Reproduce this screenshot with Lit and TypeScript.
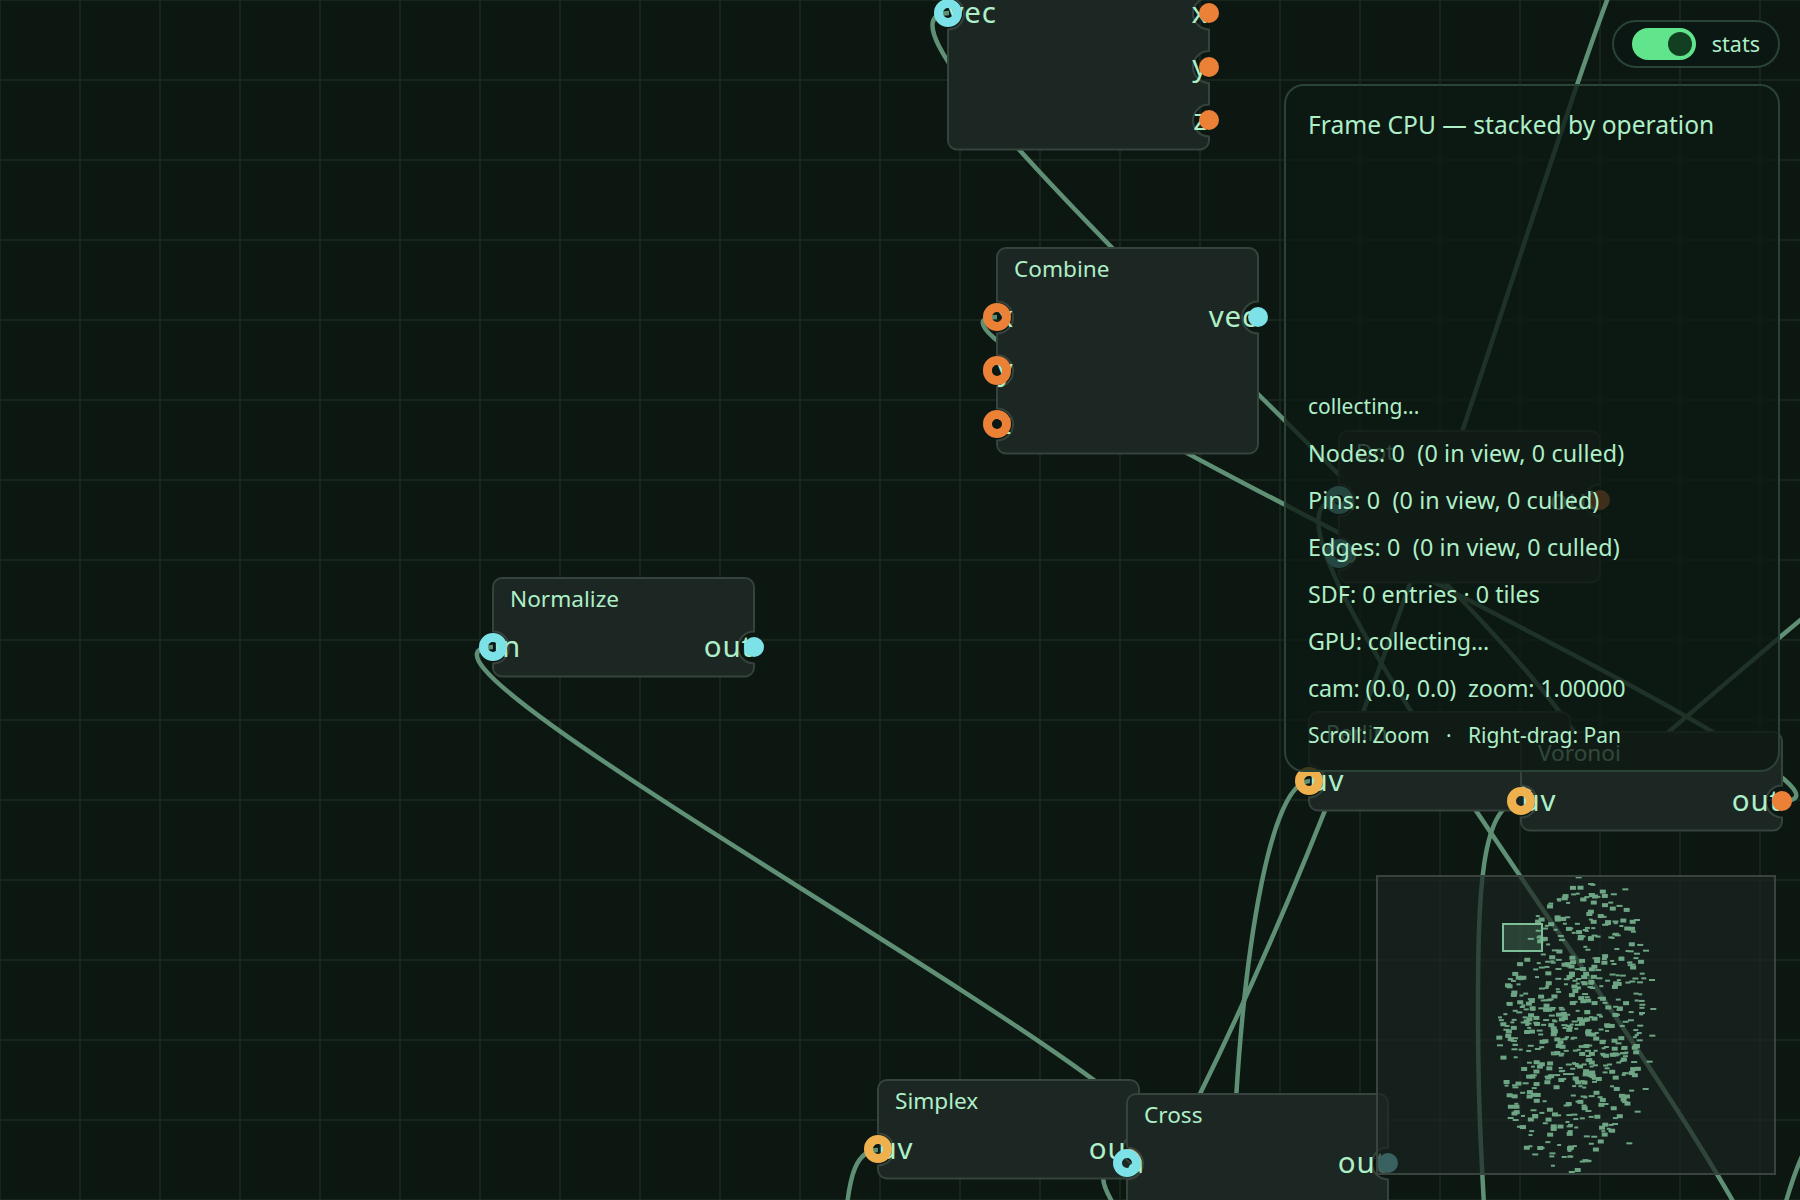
import { LitElement, html, css, svg } from "lit";
import { customElement } from "lit/decorators.js";

type Pin = { label: string; color: string };
type NodeData = { title: string; x: number; y: number; h: number; ins: Pin[]; outs: Pin[] };

const CYAN = "#7ce2e8";
const ORANGE = "#ea8137";
const YELLOW = "#efb04e";
const W = 261;
const FIRST = 69.5;
const STEP = 53.5;

const NODES: NodeData[] = [
  { title: "Dot", x: 1339, y: 430, h: 153, ins: [{ label: "a", color: CYAN }, { label: "b", color: CYAN }], outs: [{ label: "out", color: ORANGE }] },
  { title: "Perlin", x: 1309, y: 711, h: 100, ins: [{ label: "uv", color: YELLOW }], outs: [{ label: "out", color: ORANGE }] },
  { title: "Voronoi", x: 1521, y: 731, h: 100, ins: [{ label: "uv", color: YELLOW }], outs: [{ label: "out", color: ORANGE }] },
  { title: "Split", x: 948, y: -57, h: 207, ins: [{ label: "vec", color: CYAN }], outs: [{ label: "x", color: ORANGE }, { label: "y", color: ORANGE }, { label: "z", color: ORANGE }] },
  { title: "Combine", x: 997, y: 247, h: 207, ins: [{ label: "x", color: ORANGE }, { label: "y", color: ORANGE }, { label: "z", color: ORANGE }], outs: [{ label: "vec", color: CYAN }] },
  { title: "Normalize", x: 493, y: 577, h: 100, ins: [{ label: "in", color: CYAN }], outs: [{ label: "out", color: CYAN }] },
  { title: "Simplex", x: 878, y: 1079, h: 100, ins: [{ label: "uv", color: YELLOW }], outs: [{ label: "out", color: ORANGE }] },
  { title: "Cross", x: 1127, y: 1093, h: 207, ins: [{ label: "a", color: CYAN }, { label: "b", color: CYAN }], outs: [{ label: "out", color: CYAN }] },
];

const link = (x1: number, y1: number, x2: number, y2: number, d = 150) =>
  `M${x1},${y1} C${x1 + d},${y1} ${x2 - d},${y2} ${x2},${y2}`;

const WIRES: string[] = [
  link(1141, 1150, 493, 647),
  link(1573, 781, 949, 13),
  link(1782, 801, 997, 317),
  link(1761, 1340, 1339, 500),
  "M1609,-5 C1520,230 1395,700 1198,1098",
  "M1310,781 C1270,781 1245,950 1236,1100",
  "M1521,801 C1480,801 1478,900 1478,1010 C1478,1100 1481,1150 1484,1205",
  "M1600,790 C1660,740 1740,670 1810,612",
  "M1805,1150 Q1795,1170 1785,1205",
  "M878,1150 C855,1150 850,1180 847,1205",
  "M1127,1164 C1090,1164 1105,1190 1114,1205",
];

function shape(n: NodeData, h: number): string {
  const r = 9, nr = 16;
  let d = `M${r},0 H${W - r} A${r},${r} 0 0 1 ${W},${r}`;
  n.outs.forEach((_, i) => {
    const y = FIRST + STEP * i;
    d += ` V${y - nr} A${nr},${nr} 0 0 0 ${W},${y + nr}`;
  });
  d += ` V${h - r} A${r},${r} 0 0 1 ${W - r},${h} H${r} A${r},${r} 0 0 1 0,${h - r}`;
  n.ins.forEach((_, i) => {
    const y = FIRST + STEP * (n.ins.length - 1 - i);
    d += ` V${y + nr} A${nr},${nr} 0 0 0 0,${y - nr}`;
  });
  d += ` V${r} A${r},${r} 0 0 1 ${r},0 Z`;
  return d;
}

const OUTLIERS: [number, number][] = [
  [855, 272], [873, 360], [877, 447], [874, 527], [866, 605], [854, 687], [830, 755], [805, 850],
  [828, 180], [793, 88], [837, 367], [843, 459], [836, 541], [653, 52], [686, 943], [417, 556],
];

function dots() {
  let s = 20240611;
  const rnd = () => {
    s |= 0; s = (s + 0x6d2b79f5) | 0;
    let t = Math.imul(s ^ (s >>> 15), 1 | s);
    t = (t + Math.imul(t ^ (t >>> 7), 61 | t)) ^ t;
    return ((t ^ (t >>> 14)) >>> 0) / 4294967296;
  };
  const out: { x: number; y: number; w: number; h: number }[] = [];
  for (let i = 0; i < 610; i++) {
    const a = rnd() * Math.PI * 2;
    const q = Math.pow(rnd(), 0.6);
    const ny = Math.sin(a) * q;
    const x = Math.cos(a) * q * 72 + 1570 - ny * (ny < 0 ? 18 : 8);
    const y = 1027 + ny * 146;
    const big = rnd() < 0.35;
    out.push({ x: x - 3 - 1377, y: y - 877, w: big ? 6 : 4 + Math.floor(rnd() * 3), h: big ? 4 : 2 });
  }
  for (const [zx, zy] of OUTLIERS) {
    out.push({ x: zx / 3 + 1360 - 1377 - 3, y: zy / 3 + 860 - 877 - 1, w: 6, h: 2 });
  }
  return out;
}
const DOTS = dots();

@customElement("app-root")
export class AppRoot extends LitElement {
  static styles = css`
    :host {
      display: block;
      position: relative;
      width: 1800px;
      height: 1200px;
      overflow: hidden;
      background-color: #0c1712;
      background-image:
        linear-gradient(#17251d 2px, transparent 2px),
        linear-gradient(90deg, #17251d 2px, transparent 2px);
      background-size: 80px 80px;
      background-position: -1px -1px;
      font-family: "Noto Sans", "Open Sans", sans-serif;
      color: #aeefc8;
    }
    .wires {
      position: absolute;
      inset: 0;
      width: 1800px;
      height: 1200px;
    }
    .wires path {
      fill: none;
      stroke: #5f8f74;
      stroke-width: 4.5;
    }
    .node {
      position: absolute;
      width: 261px;
      display: flex;
      flex-direction: column;
    }
    .shape {
      position: absolute;
      inset: 0;
      width: 100%;
      height: 100%;
      overflow: visible;
    }
    .shape path {
      fill: #1c2622;
      stroke: #36433d;
      stroke-width: 2;
    }
    .title {
      position: relative;
      height: 41.25px;
      line-height: 41px;
      padding-left: 17px;
      font-size: 22.6px;
    }
    .rows {
      position: relative;
      display: flex;
      justify-content: space-between;
      padding: 0 1px 0 0.5px;
      font-size: 29.5px;
      letter-spacing: 0.8px;
    }
    .col {
      display: flex;
      flex-direction: column;
    }
    .col.right {
      align-items: flex-end;
    }
    .label {
      height: 53.5px;
      line-height: 53.5px;
    }
    .pin {
      position: absolute;
      border-radius: 50%;
      box-sizing: border-box;
    }
    .pin.in {
      width: 28.5px;
      height: 28.5px;
      margin: -14.25px 0 0 -14.25px;
      border-width: 9px;
      border-style: solid;
    }
    .pin.out {
      width: 20px;
      height: 20px;
      margin: -10px 0 0 -10.5px;
    }
    .hud {
      position: absolute;
      top: 20px;
      right: 20px;
      width: 496px;
      display: flex;
      flex-direction: column;
      align-items: flex-end;
      gap: 16px;
    }
    .pill {
      display: flex;
      align-items: center;
      gap: 16px;
      height: 48px;
      box-sizing: border-box;
      padding: 0 18px;
      border: 2px solid #2a4336;
      border-radius: 24px;
      background: #0b1712;
      font-size: 21.5px;
    }
    .pill span {
      padding-bottom: 2px;
    }
    .track {
      width: 64px;
      height: 32px;
      box-sizing: border-box;
      padding: 4px;
      border-radius: 16px;
      background: #61e58c;
      display: flex;
      justify-content: flex-end;
    }
    .knob {
      width: 24px;
      height: 24px;
      border-radius: 50%;
      background: #123f22;
    }
    .panel {
      width: 496px;
      height: 688px;
      box-sizing: border-box;
      padding: 21px 21px 11px 22px;
      border: 2px solid #2a4336;
      border-radius: 20px;
      background: rgba(13, 24, 18, 0.78);
      display: flex;
      flex-direction: column;
      justify-content: space-between;
    }
    .panel h2 {
      margin: 0;
      font-weight: 400;
      font-size: 24.6px;
      line-height: 36px;
    }
    .stat {
      font-size: 23.3px;
      line-height: 47px;
      white-space: pre;
    }
    .stat.small {
      font-size: 21px;
    }
    .stat.wide {
      letter-spacing: 0.12px;
    }
    .stat.tight {
      letter-spacing: -0.15px;
    }
    .mini {
      position: absolute;
      right: 24px;
      bottom: 25px;
      width: 400px;
      height: 300px;
      box-sizing: border-box;
      border: 2px solid #39443f;
      background: rgba(27, 36, 32, 0.68);
    }
    .mini svg {
      display: block;
      width: 396px;
      height: 296px;
    }
    .mini .d {
      fill: #6da585;
    }
    .mini .view {
      fill: rgba(120, 190, 150, 0.22);
      stroke: #7fbf97;
      stroke-width: 2;
    }
  `;

  private renderNode(n: NodeData) {
    const h = n.h - 1.5;
    return html`<div class="node" style="left:${n.x}px;top:${n.y + 0.5}px;height:${h}px">
      <svg class="shape" viewBox="0 0 ${W} ${h}"><path d=${shape(n, h)}></path></svg>
      <div class="title">${n.title}</div>
      <div class="rows">
        <div class="col">${n.ins.map((p) => html`<div class="label">${p.label}</div>`)}</div>
        <div class="col right">${n.outs.map((p) => html`<div class="label">${p.label}</div>`)}</div>
      </div>
      ${n.ins.map(
        (p, i) => html`<div class="pin in" style="left:0;top:${FIRST + STEP * i}px;border-color:${p.color}"></div>`
      )}
      ${n.outs.map(
        (p, i) => html`<div class="pin out" style="left:${W}px;top:${FIRST + STEP * i}px;background:${p.color}"></div>`
      )}
    </div>`;
  }

  render() {
    return html`
      <svg class="wires" viewBox="0 0 1800 1200">${WIRES.map((d) => svg`<path d=${d}></path>`)}</svg>
      ${NODES.map((n) => this.renderNode(n))}
      <div class="mini">
        <svg viewBox="0 0 396 296">
          ${DOTS.map((d) => svg`<rect class="d" x=${d.x} y=${d.y} width=${d.w} height=${d.h}></rect>`)}
          <rect class="view" x="125" y="47" width="39" height="27"></rect>
        </svg>
      </div>
      <div class="hud">
        <div class="pill">
          <div class="track"><div class="knob"></div></div>
          <span>stats</span>
        </div>
        <div class="panel">
          <h2>Frame CPU — stacked by operation</h2>
          <div>
            <div class="stat small">collecting...</div>
            <div class="stat wide">Nodes: 0  (0 in view, 0 culled)</div>
            <div class="stat wide">Pins: 0  (0 in view, 0 culled)</div>
            <div class="stat wide">Edges: 0  (0 in view, 0 culled)</div>
            <div class="stat">SDF: 0 entries · 0 tiles</div>
            <div class="stat tight">GPU: collecting...</div>
            <div class="stat tight">cam: (0.0, 0.0)  zoom: 1.00000</div>
            <div class="stat small">Scroll: Zoom   ·   Right-drag: Pan</div>
          </div>
        </div>
      </div>
    `;
  }
}
